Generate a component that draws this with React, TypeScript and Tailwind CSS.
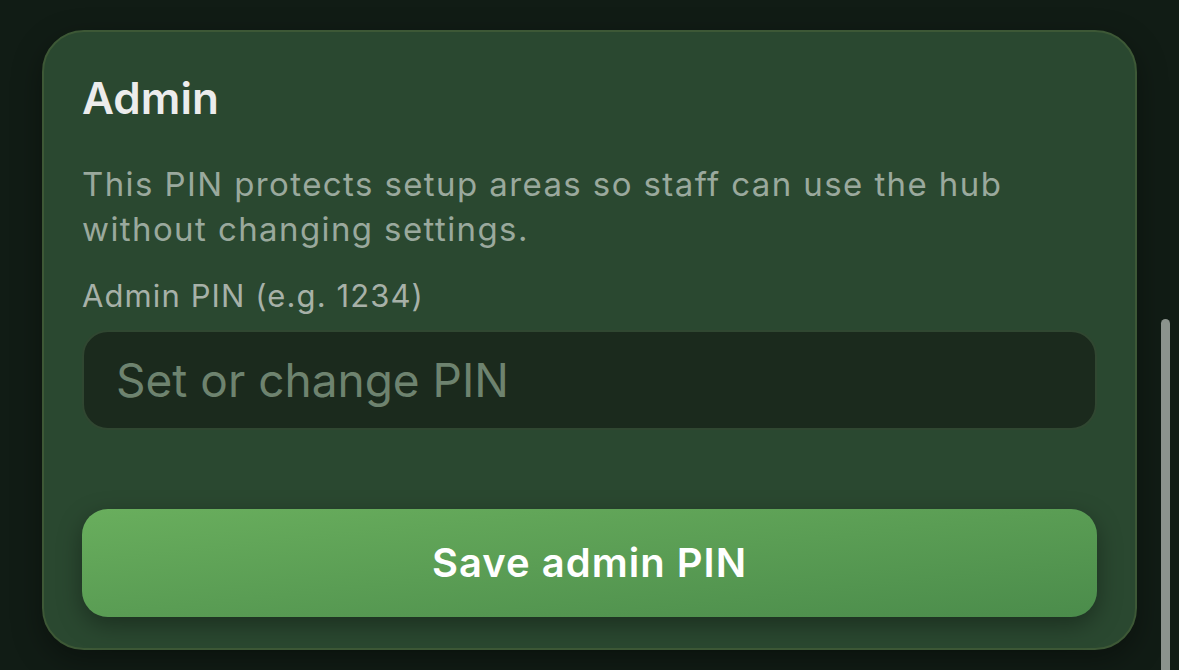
import React from "react";

const App = () => {
  return (
    <div
      className="relative w-[1179px] h-[670px] overflow-hidden bg-[#111c15] px-[42px] pt-[30px]"
      style={{ fontFamily: "Inter, 'Noto Sans', sans-serif" }}
    >
      <div className="w-[1095px] h-[620px] rounded-[42px] border-2 border-[#3d5836] bg-[#2a4830] px-[38px] pt-[40px] shadow-[0_10px_30px_rgba(0,0,0,0.35)]">
        <h2 className="text-[44px] leading-[52px] font-semibold text-[#ececec]">Admin</h2>
        <p className="mt-[38px] text-[33px] leading-[45px] tracking-[1.4px] text-[#9aa99d]">
          This PIN protects setup areas so staff can use the hub
          <br />
          without changing settings.
        </p>
        <div className="mt-[26px] text-[31px] leading-[36px] tracking-[1.1px] text-[#a7b1a8]">Admin PIN (e.g. 1234)</div>
        <div className="mt-[16px] h-[100px] rounded-[26px] border-2 border-[#304731] bg-[#1b2a1d] flex items-center px-[32px]">
          <span className="text-[46px] text-[#6e836f]">Set or change PIN</span>
        </div>
        <button className="mt-[79px] w-full h-[108px] rounded-[26px] bg-gradient-to-br from-[#69ae5d] to-[#4b8c4b] shadow-[0_8px_24px_rgba(0,0,0,0.35)] text-white text-[40px] tracking-[1px] font-semibold">
          Save admin PIN
        </button>
      </div>
      <div className="absolute left-[1161px] top-[319px] w-[9px] h-[360px] rounded-full bg-[#8b938d]" />
    </div>
  );
};

export default App;
